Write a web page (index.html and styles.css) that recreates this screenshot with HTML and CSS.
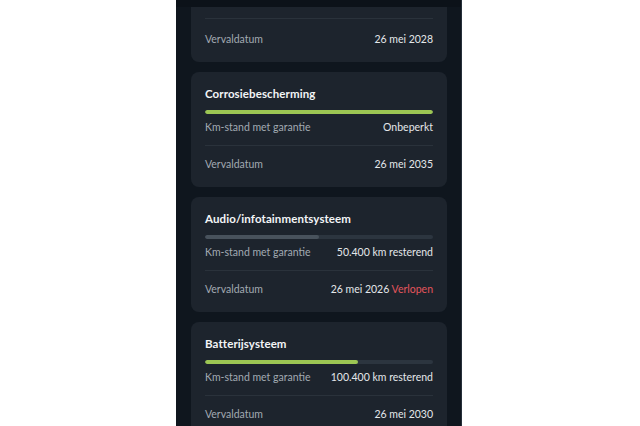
FILE: index.html
```html
<!DOCTYPE html>
<html lang="nl">
<head>
<meta charset="utf-8">
<title>Garantie</title>
<link rel="stylesheet" href="styles.css">
</head>
<body>
<div class="page">
  <main class="screen">
    <div class="topbar"></div>
    <div class="list">
      <section class="card card-cut">
        <div class="row row-date">
          <span class="label">Vervaldatum</span>
          <span class="value">26 mei 2028</span>
        </div>
      </section>

      <section class="card">
        <h2 class="title">Corrosiebescherming</h2>
        <div class="bar"><div class="fill fill-green" style="width:100%"></div></div>
        <div class="row row-km">
          <span class="label">Km-stand met garantie</span>
          <span class="value">Onbeperkt</span>
        </div>
        <div class="row row-date">
          <span class="label">Vervaldatum</span>
          <span class="value">26 mei 2035</span>
        </div>
      </section>

      <section class="card">
        <h2 class="title">Audio/infotainmentsysteem</h2>
        <div class="bar"><div class="fill fill-grey" style="width:50%"></div></div>
        <div class="row row-km">
          <span class="label">Km-stand met garantie</span>
          <span class="value">50.400 km resterend</span>
        </div>
        <div class="row row-date">
          <span class="label">Vervaldatum</span>
          <span class="value">26 mei 2026 <span class="expired">Verlopen</span></span>
        </div>
      </section>

      <section class="card">
        <h2 class="title">Batterijsysteem</h2>
        <div class="bar"><div class="fill fill-green" style="width:67%"></div></div>
        <div class="row row-km">
          <span class="label">Km-stand met garantie</span>
          <span class="value">100.400 km resterend</span>
        </div>
        <div class="row row-date">
          <span class="label">Vervaldatum</span>
          <span class="value">26 mei 2030</span>
        </div>
      </section>
    </div>
  </main>
</div>
</body>
</html>
```

FILE: styles.css
```css
html, body {
  margin: 0;
  padding: 0;
  background: #ffffff;
  height: 100%;
  overflow: hidden;
}

.page {
  display: flex;
  justify-content: center;
  height: 426px;
}

.screen {
  width: 285px;
  margin-left: -2px;
  height: 426px;
  background: #0f161e;
  border-right: 1px solid #26303a;
  display: flex;
  flex-direction: column;
  overflow: hidden;
  font-family: "Lato", "Noto Sans", sans-serif;
}

.topbar {
  height: 7px;
  flex: none;
  background: #0c1219;
}

.list {
  display: flex;
  flex-direction: column;
  gap: 10px;
  padding: 0 14px 0 15px;
}

.card {
  background: #1d242d;
  border-radius: 8px;
  padding: 14px 14px 15px;
  display: flex;
  flex-direction: column;
}

.card-cut {
  border-radius: 0 0 8px 8px;
  padding-top: 11px;
}

.card-cut .row-date {
  border-top: 1px solid #2a323b;
  padding-top: 12px;
}

.title {
  margin: 0;
  font-size: 11.5px;
  line-height: 16px;
  font-weight: 700;
  color: #f3f5f7;
  letter-spacing: 0.1px;
}

.bar {
  margin-top: 8px;
  height: 4px;
  border-radius: 2px;
  background: #2c353f;
  overflow: hidden;
}

.fill {
  height: 100%;
  border-radius: 2px;
}

.fill-green { background: #9cc653; }
.fill-grey { background: #48525c; }

.row {
  display: flex;
  justify-content: space-between;
  align-items: center;
  font-size: 10.5px;
  line-height: 16px;
}

.row-km {
  margin-top: 5px;
  padding-bottom: 10px;
  border-bottom: 1px solid #2a323b;
}

.row-date {
  padding-top: 10px;
}

.label { color: #a2aab2; }
.value { color: #e4e7ea; }
.expired { color: #e2545c; }
```
